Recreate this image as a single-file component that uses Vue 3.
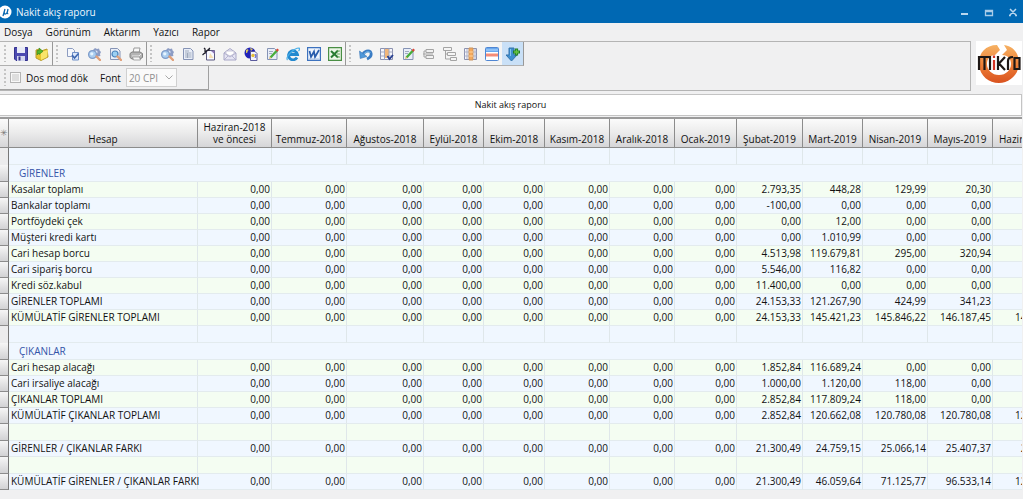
<script setup>
import { ref } from 'vue'

const magnifier = '<path d="M9.500 9.500L13 13" stroke="#e0a07a" stroke-width="2.400" stroke-linecap="round"/>'
const gears = '<path d="M8 1l2 1 2-.6.6 2L14 5l-1 2 .4 2-2.400.6L9.500 11 8 10H6l-1-2 1-2 0-3z" fill="#8c9cc4"/><circle cx="9" cy="5" r="1.600" fill="#dfe6f5"/><circle cx="5.500" cy="7.500" r="3.900" fill="#a9cdf0" stroke="#7f9cc9" stroke-width="1.300"/><circle cx="4.800" cy="6.800" r="1.600" fill="#e6f4ff"/>' + magnifier
const page = '<path d="M2.500 1.500h7l2.500 2.500v8.500h-9.500z" fill="#e9eef8" stroke="#8593b5"/>'

const icons = {
  save: '<path d="M.5.5h13v13H2L.5 12z" fill="#4c4ab0" stroke="#34328e"/><path d="M3 0h8v6H3z" fill="#e8ebf6"/><path d="M3 9h8v5H3z" fill="#d4d7ee"/><path d="M4.500 9.500h2v4h-2z" fill="#34328e"/>',
  folder: '<path d="M1 3l4-1 1 2 6-2 1 8-7 3.500L1 11z" fill="#e8c52c" stroke="#b89c2c"/><path d="M6 5l7-2-1 7-6 3z" fill="#f9e56a"/><path d="M2 8V3.500h2V1L8 4.300 4 7.500V6z" fill="#55b72c" stroke="#2f8420" stroke-width=".6"/>',
  copy: '<path d="M1.500 1.500h5l2 2v6h-7z" fill="#f4f7fd" stroke="#8d9cc0"/><path d="M6.500 5.500h6v7.500h-6z" fill="#dbe7fa" stroke="#6f90c8"/><path d="M6 8l2.500 3 4-4.500" fill="none" stroke="#3c66b0" stroke-width="1.600"/>',
  search: gears,
  preview: page + '<circle cx="7" cy="7" r="3" fill="#9cd0f3" stroke="#4a83bd" stroke-width="1.200"/>' + magnifier,
  printer: '<path d="M4 6l1-5h6l-1 5z" fill="#f8f8f8" stroke="#999"/><path d="M1 6.500l2-1.500h8l2.500 1.500v4L11 12H3l-2-1.500z" fill="#b4b4b4" stroke="#808080"/><path d="M3 9h7l2-2" stroke="#ededed" fill="none"/><path d="M3.500 10h7l1 3h-7z" fill="#f6f6f6" stroke="#888" stroke-width=".7"/>',
  document: page + '<path d="M4 4h4M4 6h6.500M4 8h6.500M4 10h6.500M6.500 6v5" stroke="#98a4b8" stroke-width=".9"/>',
  design: '<path d="M4.500 3.500h8V13h-8z" fill="#f7f8ff" stroke="#5b5980"/><path d="M.5 8L8 1M2 1l1.500 1.500M3 4l5-1M3 2v5" stroke="#20202c" stroke-width="1.200"/><path d="M8 6l3.500 5H7z" fill="#f6dfb0"/><path d="M9 4l3.500-.5V7" fill="#8f77b7"/>',
  mail: '<path d="M1 6l6-4.500L13 6v7H1z" fill="#e6e5f3" stroke="#a9a8c8"/><path d="M3 7V4h8v3L7 9z" fill="#fff" stroke="#b7b6cc" stroke-width=".7"/><path d="M1 6l6 4 6-4M1 13l4-4M13 13L9 9" fill="none" stroke="#a9a8c8" stroke-width=".8"/>',
  web: '<circle cx="6" cy="6" r="5.500" fill="#2224b8"/><path d="M2 3c2-2 3 0 2 1s0 2-2 2zM6 1l3 1-2 2z" fill="#d8c860"/><path d="M6.500 4.500h4.500l2 2v7H6.500z" fill="#f4f5ff" stroke="#5a5a9c"/><circle cx="9" cy="8.500" r="1.700" fill="#e4bd35"/><path d="M11 7l1 2-1 2" stroke="#4d57c5" fill="none"/>',
  edit: page + '<path d="M4 4.500h4M4 6.500h3" stroke="#a0aac0"/><path d="M5.500 10.500l6.500-7" stroke="#48ad3d" stroke-width="2.400"/><path d="M11.500 4l1.700-1.800" stroke="#d94738" stroke-width="2.400"/><path d="M4 12l.8-2.600 1.800 1.600z" fill="#dfb45f"/>',
  explorer: '<path d="M11 10.500A4.500 4.500 0 1 1 11.500 7.500H4" fill="none" stroke="#2389cf" stroke-width="2.800"/><path d="M1.500 13C-1 10 8 1 13 1c1.500 1-.5 3-.5 3" fill="none" stroke="#48aee7" stroke-width="1.200"/>',
  word: '<path d="M.5.5h13v13H.5z" fill="#eef4fd" stroke="#3d72be" stroke-width="1.400"/><path d="M2.500 4l1.500 6L7 4.500 8 10l4-7" fill="none" stroke="#285cac" stroke-width="1.700"/><path d="M2 12h10" stroke="#a7bee0"/>',
  excel: '<path d="M.5.5h13v13H.5z" fill="#edf7e8" stroke="#4a8f45" stroke-width="1.400"/><path d="M3 4l7 6.500M10 3.500l-7 7" stroke="#287b32" stroke-width="2"/><path d="M9 4h3M9 7h3M9 10h3" stroke="#65a45c"/>',
  undo: '<path d="M3.500 9C4 4 11 2 12 6s-2 5-4 6" fill="none" stroke="#3a7cc4" stroke-width="2.800"/><path d="M4 8.500C5 5 10 3.500 11.500 6" fill="none" stroke="#7dc0ee" stroke-width="1"/><path d="M.5 4l.7 7.500L8 9.500z" fill="#4f98da" stroke="#3c78b8" stroke-width=".6"/>',
  tableCheck: '<path d="M.5 1.500h12v11H.5z" fill="#f5f6fc" stroke="#8c92b0"/><path d="M4.500 1.500v11M.5 5h12M.5 9h12" stroke="#a1a7c0"/><path d="M5 2h4v9H5z" fill="#f2b679"/><path d="M9 1.500v11" stroke="#a1a7c0"/><path d="M7.500 9l2 3 3.500-4" fill="none" stroke="#273f91" stroke-width="1.800"/>',
  field: '<path d="M4 2.500h7.500v3H4zM4 8.500h7.500v3H4z" fill="#f2f2f2" stroke="#a4a4a4"/><path d="M4 4H2v6h2M1 7h10" fill="none" stroke="#a4a4a4"/>',
  tree: '<path d="M.5.500h8v3h-8zM4.500 5.500h8v3h-8zM7.500 10.500h6v3h-6z" fill="#f5f5f5" stroke="#a4a4a4"/><path d="M2.500 4v8h5M2.500 7h2" fill="none" stroke="#a4a4a4"/>',
  column: '<path d="M.5 1.500h12v11H.5z" fill="#f5f6fc" stroke="#8c92b0"/><path d="M.5 5h12M.5 9h12M3 2v10M11 2v10" stroke="#aeb3c9"/><path d="M5 1h4v12H5z" fill="#f5a85a" stroke="#c99461"/><path d="M5 5h4M5 9h4" stroke="#ffd39c"/>',
  row: '<rect x=".5" y=".5" width="13" height="13" rx="1" fill="#fff" stroke="#4f86d3"/><path d="M1 1h12v4H1z" fill="#6aa9ee"/><path d="M1 6.500h12v3H1z" fill="#f58c78"/><path d="M1 3h12" stroke="#b6d9ff"/>',
  insert: '<path d="M3 1h5v7h3l-5.500 6L0 8h3z" fill="#3f8fd0" stroke="#3474ac"/><path d="M4.500 2v7" stroke="#83c4ee"/><path d="M10.500 1.500v7M7 5h7" stroke="#1f7a25" stroke-width="3.200"/><path d="M10.500 2.500v5M8 5h5" stroke="#65c442" stroke-width="1.500"/>'
}

const tool = (icon, label, active = false) => ({ icon, label, active })
const groups = [
  [tool('save', 'Kaydet'), tool('folder', 'Aç')],
  [tool('copy', 'Kopyala'), tool('search', 'Ara'), tool('preview', 'Önizleme'), tool('printer', 'Yazdır')],
  [tool('search', 'İncele'), tool('document', 'Belge'), tool('design', 'Tasarım'), tool('mail', 'E-posta'), tool('web', 'Web'), tool('edit', 'Düzenle'), tool('explorer', 'Tarayıcı'), tool('word', 'Word'), tool('excel', 'Excel')],
  [tool('undo', 'Geri al'), tool('tableCheck', 'Tablo seç'), tool('edit', 'Not'), tool('field', 'Alanlar'), tool('tree', 'Ağaç'), tool('column', 'Sütun'), tool('row', 'Satır'), tool('insert', 'Ekle', true)]
]

const menus = ['Dosya', 'Görünüm', 'Aktarım', 'Yazıcı', 'Rapor']
const months = ['Haziran-2018\nve öncesi', 'Temmuz-2018', 'Ağustos-2018', 'Eylül-2018', 'Ekim-2018', 'Kasım-2018', 'Aralık-2018', 'Ocak-2019', 'Şubat-2019', 'Mart-2019', 'Nisan-2019', 'Mayıs-2019', 'Haziran-2019']

const zeros = Array(8).fill('0,00')
const line = (name, tone, ...values) => ({ kind: 'data', name, tone, values: [...zeros, ...values] })
const blank = (tone) => ({ kind: 'blank', name: '', tone, values: Array(13).fill('') })
const section = (name) => ({ kind: 'section', name, tone: 'blue' })

const rows = [
  blank('blue'),
  section('GİRENLER'),
  line('Kasalar toplamı', 'green', '2.793,35', '448,28', '129,99', '20,30', ''),
  line('Bankalar toplamı', 'blue', '-100,00', '0,00', '0,00', '0,00', ''),
  line('Portföydeki çek', 'green', '0,00', '12,00', '0,00', '0,00', ''),
  line('Müşteri kredi kartı', 'blue', '0,00', '1.010,99', '0,00', '0,00', ''),
  line('Cari hesap borcu', 'green', '4.513,98', '119.679,81', '295,00', '320,94', ''),
  line('Cari sipariş borcu', 'blue', '5.546,00', '116,82', '0,00', '0,00', ''),
  line('Kredi söz.kabul', 'green', '11.400,00', '0,00', '0,00', '0,00', ''),
  line('GİRENLER TOPLAMI', 'blue', '24.153,33', '121.267,90', '424,99', '341,23', ''),
  line('KÜMÜLATİF GİRENLER TOPLAMI', 'green', '24.153,33', '145.421,23', '145.846,22', '146.187,45', '146.187,45'),
  blank('blue'),
  section('ÇIKANLAR'),
  line('Cari hesap alacağı', 'green', '1.852,84', '116.689,24', '0,00', '0,00', ''),
  line('Cari irsaliye alacağı', 'blue', '1.000,00', '1.120,00', '118,00', '0,00', ''),
  line('ÇIKANLAR TOPLAMI', 'green', '2.852,84', '117.809,24', '118,00', '0,00', ''),
  line('KÜMÜLATİF ÇIKANLAR TOPLAMI', 'blue', '2.852,84', '120.662,08', '120.780,08', '120.780,08', '120.780,08'),
  blank('green'),
  line('GİRENLER / ÇIKANLAR FARKI', 'blue', '21.300,49', '24.759,15', '25.066,14', '25.407,37', '25.407,37'),
  blank('green'),
  line('KÜMÜLATİF GİRENLER / ÇIKANLAR FARKI', 'blue', '21.300,49', '46.059,64', '71.125,77', '96.533,14', '121.940,51')
]

const dosMode = ref(false)
</script>

<template>
  <main class="window">
    <header class="titlebar">
      <svg class="app-icon" viewBox="0 0 14 14" aria-hidden="true">
        <circle cx="5" cy="7" r="6.500" fill="#fff" />
        <path d="M3 11L5 4M4.300 7c-.5 3 2 2.500 3 .3L8 4M7.300 7c-.4 1.500 0 2 1 1.500" fill="none" stroke="#0868b0" stroke-width="1.300" />
      </svg>
      <h1>Nakit akış raporu</h1>
      <div class="controls">
        <button type="button" aria-label="Küçült"><svg viewBox="0 0 10 10"><path d="M1 7h7" stroke="#b9d6ee" stroke-width="2" /></svg></button>
        <button type="button" aria-label="Büyüt"><svg viewBox="0 0 10 10"><path d="M1.500 3.500h7v5h-7zM1 4.500h8" fill="none" stroke="#a9cce8" stroke-width="1.300" /></svg></button>
        <button type="button" aria-label="Kapat"><svg viewBox="0 0 10 10"><path d="M2 2l6 6M8 2L2 8M1 8.500h2M7 8.500h2" stroke="#b9d6ee" stroke-width="1.500" /></svg></button>
      </div>
    </header>

    <nav class="menu">
      <button v-for="m in menus" :key="m" type="button">{{ m }}</button>
    </nav>

    <div class="top">
      <div class="toolbars">
        <div class="toolbar">
          <div v-for="(g, i) in groups" :key="i" class="group">
            <span class="grip"></span>
            <button v-for="t in g" :key="t.label" type="button" class="tool" :class="{ active: t.active }" :aria-label="t.label">
              <svg viewBox="0 0 14 14" fill="none" aria-hidden="true" v-html="icons[t.icon]"></svg>
            </button>
          </div>
        </div>
        <div class="options">
          <span class="grip"></span>
          <label class="check"><input v-model="dosMode" type="checkbox" />Dos mod dök</label>
          <label class="font-label" for="font">Font</label>
          <span class="picker">
            <select id="font" disabled><option>20 CPI</option></select>
            <svg viewBox="0 0 8 5" aria-hidden="true"><path d="M.5.500L4 4 7.500.5" fill="none" stroke="#a8a8a8" /></svg>
          </span>
        </div>
      </div>
      <svg class="logo" viewBox="0 0 46 44" role="img" aria-label="mikro">
        <defs>
          <linearGradient id="ring" x1="0" y1="0" x2="0" y2="1">
            <stop offset="0" stop-color="#f6b264" />
            <stop offset=".5" stop-color="#ee8138" />
            <stop offset="1" stop-color="#d9521f" />
          </linearGradient>
        </defs>
        <path fill="#fff" d="M0 0h46v44H0z" />
        <path d="M21 4C9 4 2 13 3 24c1 11 10 18 20 18 11 0 20-9 20-20C43 12 37 5 28 4l3 5-5 5c6 0 9 4 9 9 0 6-5 11-12 11S11 29 11 23c0-5 3-9 8-9l5-5z" fill="url(#ring)" />
        <path d="M3 29V16h11v13M8.500 16v13M22 15v14M29 16l-6 6.500 6 6.500M32 29V20q0-4 5-4M38.500 17h5v11h-5z" fill="none" stroke="#1d1715" stroke-width="2.200" />
        <path d="M18 19v10M18 14.500v2.500" stroke="#d53424" stroke-width="2.200" />
      </svg>
    </div>

    <h2 class="caption">Nakit akış raporu</h2>

    <div class="grid">
      <table>
        <colgroup>
          <col class="w9" /><col class="w189" /><col class="w74" /><col class="w75" /><col class="w77" /><col class="w60" /><col class="w61" /><col class="w65" /><col class="w65" /><col class="w62" /><col class="w66" /><col class="w60" /><col class="w65" /><col class="w65" /><col class="w75" />
        </colgroup>
        <thead>
          <tr>
            <th class="mark">✳</th>
            <th scope="col">Hesap</th>
            <th v-for="m in months" :key="m" scope="col">{{ m }}</th>
          </tr>
        </thead>
        <tbody>
          <tr v-for="(r, i) in rows" :key="i" :class="[r.kind, r.tone]">
            <td class="handle" :class="{ open: rows[i + 1]?.kind === 'section' }"></td>
            <td v-if="r.kind === 'section'" class="name" colspan="14">{{ r.name }}</td>
            <template v-else>
              <td class="name">{{ r.name }}</td>
              <td v-for="(v, j) in r.values" :key="j" class="num">{{ v }}</td>
            </template>
          </tr>
        </tbody>
      </table>
    </div>
  </main>
</template>

<style>
body {
  background: #f0f0f1;
}
</style>

<style scoped>
.window {
  min-height: 100vh;
  overflow: hidden;
  background: #f0f0f1;
  color: #111;
  font: 10px/16px "Open Sans", "Noto Sans", sans-serif;
}
button {
  padding: 0;
  border: 0;
  background: none;
  color: inherit;
  font: inherit;
}
.titlebar {
  display: flex;
  align-items: center;
  height: 23px;
  background: #0068b3;
  color: #f0f7fd;
}
.app-icon {
  width: 14px;
  height: 14px;
}
h1 {
  margin: 0 0 0 2px;
  font-size: 10px;
  font-weight: 400;
  line-height: 20px;
}
.controls {
  display: flex;
  gap: 14px;
  margin-left: auto;
  padding-right: 5px;
}
.controls button {
  width: 10px;
  height: 10px;
}
.controls svg {
  display: block;
}
.menu {
  display: flex;
  gap: 13px;
  height: 18px;
  padding-left: 4px;
}
.menu button {
  line-height: 16px;
}
.top {
  display: flex;
  justify-content: space-between;
  padding-right: 1px;
}
.toolbars {
  flex: 1;
  margin-right: 5px;
  border: 1px solid #b4b4b4;
  border-left: 0;
}
.toolbar {
  display: flex;
}
.group {
  display: flex;
  height: 23px;
  padding-left: 3px;
  border-right: 1px solid #989898;
  border-bottom: 1px solid #b0b0b0;
  background: #f4f4f4;
}
.group:first-child {
  padding-left: 4px;
}
.grip {
  width: 2px;
  margin: 3px 4px 3px 0;
  background: repeating-linear-gradient(#c4c4c4 0 2px, transparent 2px 4px);
}
.tool {
  display: flex;
  align-items: center;
  justify-content: center;
  width: 21px;
}
.tool svg {
  width: 14px;
  height: 14px;
}
.tool.active {
  background: #c9e0f7;
}
.options {
  display: flex;
  align-items: center;
  width: 204px;
  height: 23px;
  padding-left: 4px;
  border-right: 1px solid #a0a0a0;
  border-bottom: 1px solid #a0a0a0;
}
.options .grip {
  align-self: stretch;
}
.check {
  display: flex;
  align-items: center;
  gap: 5px;
}
.check input {
  appearance: none;
  box-sizing: border-box;
  width: 11px;
  height: 11px;
  margin: 0;
  border: 1px solid #b4b4b4;
  background: #dedede;
  box-shadow: inset 0 0 0 1px #f8f8f8;
}
.check input:checked {
  background: #3c76b8;
}
.font-label {
  margin: 0 5px 0 12px;
}
.picker {
  display: grid;
  align-items: center;
  width: 51px;
  height: 19px;
  border: 1px solid #d0d0d0;
  box-sizing: border-box;
  background: #fafafa;
}
.picker select,
.picker svg {
  grid-area: 1 / 1;
}
.picker select {
  appearance: none;
  width: 100%;
  padding: 0 0 0 2px;
  border: 0;
  background: none;
  color: #909090;
  font: inherit;
  opacity: 1;
}
.picker svg {
  justify-self: end;
  width: 8px;
  height: 5px;
  margin-right: 3px;
}
.logo {
  width: 46px;
  height: 44px;
}
.caption {
  margin: 3px 1px 1px 0;
  border: 1px solid #c4c4c4;
  border-left: 0;
  background: #fff;
  font-size: 9px;
  font-weight: 400;
  line-height: 20px;
  padding-bottom: 0;
  text-align: center;
}
.grid {
  margin-right: 1px;
  border-top: 2px solid #9b9b9b;
  overflow: hidden;
}
table {
  width: 1068px;
  table-layout: fixed;
  border-collapse: separate;
  border-spacing: 0;
}
.w9 { width: 9px; }
.w60 { width: 60px; }
.w61 { width: 61px; }
.w62 { width: 62px; }
.w65 { width: 65px; }
.w66 { width: 66px; }
.w74 { width: 74px; }
.w75 { width: 75px; }
.w77 { width: 77px; }
.w189 { width: 189px; }
th,
td {
  box-sizing: border-box;
  padding: 0;
  white-space: nowrap;
}
th {
  height: 29px;
  padding: 0 0 2px;
  border-right: 1px solid #8c8c8c;
  border-bottom: 1px solid #8c8c8c;
  background: linear-gradient(#fbfbfb, #ebebeb 50%, #d6d6d8);
  font-weight: 400;
  line-height: 12px;
  vertical-align: bottom;
  white-space: pre;
}
th.mark {
  padding: 0;
  color: #777;
  font-size: 9px;
  vertical-align: middle;
}
td {
  height: 16px;
  border-right: 1px solid #dfe7ea;
  border-bottom: 1px solid #e3ebee;
  line-height: 15px;
}
.blank td,
.section td {
  height: 17px;
}
.blue td {
  background: #f0f7ff;
}
.green td {
  background: #f4fdf2;
}
tr td.handle {
  border-right: 1px solid #777;
  border-bottom: 1px solid #8c8c8c;
  background: linear-gradient(#f6f6f6, #d2d2d4);
}
tr.blank td.open {
  border-bottom: 0;
  background: #ececed;
}
td.name {
  padding-left: 2px;
}
.section td.name {
  padding-left: 10px;
  color: #3454a8;
}
td.num {
  padding-right: 1px;
  text-align: right;
}
</style>
